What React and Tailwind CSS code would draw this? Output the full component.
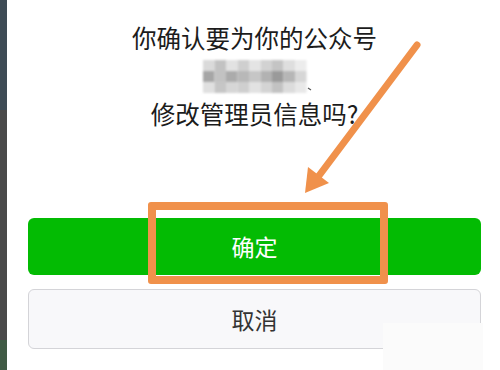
import React from "react";

const cjk = { fontFamily: '"Noto Sans CJK SC", "Noto Sans", sans-serif' };

const Mosaic = () => {
  const cells = [
    "#dadada", "#c2c2c2", "#e2e2e2", "#cfcfcf", "#e4e4e4", "#d2d2d2", "#c4c4c4", "#dedede", "#ececec",
    "#a6a6a6", "#c2c2c2", "#ababab", "#b8b8b8", "#c6c6c6", "#b2b2b2", "#9a9a9a", "#b6b6b6", "#d6d6d6",
    "#e0e0e0", "#c6c6c6", "#d6d6d6", "#cfcfcf", "#e2e2e2", "#d4d4d4", "#c2c2c2", "#dcdcdc", "#e8e8e8",
  ];
  return (
    <svg width="112" height="38" viewBox="0 0 112 38">
      <defs>
        <filter id="b" x="-10%" y="-10%" width="120%" height="120%">
          <feGaussianBlur stdDeviation="1.1" />
        </filter>
      </defs>
      <g filter="url(#b)">
        {cells.map((c, i) => (
          <rect key={i} x={(i % 9) * 11.5 + 2} y={Math.floor(i / 9) * 11 + 3} width="11.5" height="11" fill={c} />
        ))}
      </g>
      <path d="M107 31 l3 2" stroke="#555" strokeWidth="1.2" />
    </svg>
  );
};

export default function App() {
  return (
    <div className="relative flex h-[370px] w-[500px] overflow-hidden bg-white" style={cjk}>
      <div className="flex w-[7px] flex-col">
        <div className="h-[110px] bg-[#3e4b55]" />
        <div className="flex-1 bg-[#4a4a4a]" />
        <div className="h-[30px] bg-[#3f5a45]" />
      </div>

      <div className="flex flex-1 flex-col pl-[21px] pr-[19px]">
        <div className="flex flex-col items-center pt-[19px] text-[24.5px] leading-[38px] text-[#1c1c1c]">
          <div>你确认要为你的公众号</div>
          <div className="flex h-[38px] items-center pl-[4px]">
            <Mosaic />
          </div>
          <div>修改管理员信息吗?</div>
        </div>

        <button className="mt-[85px] flex h-[57px] items-center justify-center rounded-[6px] bg-[#03bb03] text-[23px] text-white">
          确定
        </button>
        <button className="mt-[14px] flex h-[60px] items-center justify-center rounded-[6px] border border-[#d4d4d8] bg-[#f8f8fa] text-[23px] text-[#333]">
          取消
        </button>
      </div>

      <div className="absolute left-[383px] top-[323px] h-[47px] w-[100px] bg-[#fbfbfb]" />

      <div className="absolute left-[148px] top-[202px] h-[82px] w-[240px] rounded-[3px] border-[8px] border-[#f0914b]" />

      <svg className="absolute left-0 top-0" width="500" height="370" viewBox="0 0 500 370">
        <line x1="417" y1="45" x2="318" y2="177" stroke="#f0914b" strokeWidth="7" strokeLinecap="round" />
        <polygon points="305,193 308,167 329,183" fill="#f0914b" />
      </svg>
    </div>
  );
}
